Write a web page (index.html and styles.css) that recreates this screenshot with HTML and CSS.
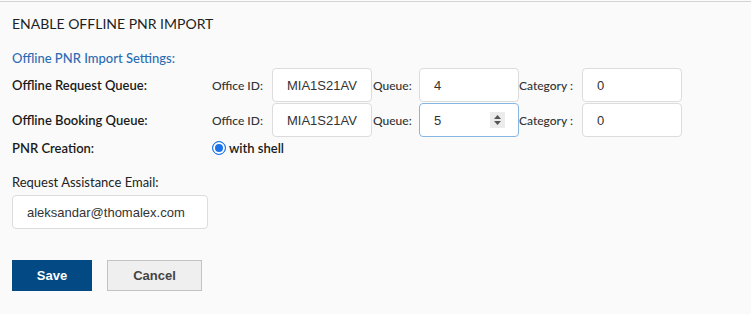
FILE: index.html
```html
<!DOCTYPE html>
<html lang="en">
<head>
  <meta charset="UTF-8">
  <title>Enable Offline PNR Import</title>
  <link rel="stylesheet" href="styles.css">
</head>
<body>
  <div class="page">
    <h1 class="title">ENABLE OFFLINE PNR IMPORT</h1>
    <h2 class="section">Offline PNR Import Settings:</h2>

    <div class="row">
      <div class="row-label">Offline Request Queue:</div>
      <span class="lbl lbl-office">Office ID:</span>
      <input class="field" type="text" value="MIA1S21AV">
      <span class="lbl lbl-queue">Queue:</span>
      <input class="field" type="text" value="4">
      <span class="lbl lbl-cat">Category :</span>
      <input class="field" type="text" value="0">
    </div>

    <div class="row row-2">
      <div class="row-label">Offline Booking Queue:</div>
      <span class="lbl lbl-office">Office ID:</span>
      <input class="field" type="text" value="MIA1S21AV">
      <span class="lbl lbl-queue">Queue:</span>
      <div class="spin-wrap">
        <input class="field field-focus" type="text" value="5">
        <span class="spinner">
          <svg width="9" height="12" viewBox="0 0 9 12"><path d="M4.5 1 L8 5 H1 Z M4.5 11 L8 7 H1 Z" fill="#555"/></svg>
        </span>
      </div>
      <span class="lbl lbl-cat">Category :</span>
      <input class="field" type="text" value="0">
    </div>

    <div class="row-pnr">
      <div class="row-label">PNR Creation:</div>
      <label class="radio"><span class="dot"></span>with shell</label>
    </div>

    <div class="email-label">Request Assistance Email:</div>
    <input class="field field-email" type="text" value="aleksandar@thomalex.com">

    <div class="actions">
      <button class="btn btn-save">Save</button>
      <button class="btn btn-cancel">Cancel</button>
    </div>
  </div>
</body>
</html>
```

FILE: styles.css
```css
html {
  background: #fafafa;
}

body {
  margin: 0;
  font-family: Lato, "Open Sans", sans-serif;
  color: #222;
}

.page {
  margin-top: 1px;
  border-top: 1px solid #d4d4d4;
  padding: 12px 12px 0 12px;
}

.title {
  margin: 0;
  font-size: 14px;
  font-weight: normal;
  line-height: 20px;
  color: #1e1e1e;
}

.section {
  margin: 14px 0 0 0;
  font-size: 13px;
  font-weight: 500;
  line-height: 20px;
  color: #2c6cb3;
}

.row {
  display: flex;
  align-items: center;
  height: 34px;
}

.row-2 {
  margin-top: 1px;
}

.row-label {
  width: 200px;
  flex-shrink: 0;
  font-size: 13px;
  font-weight: 600;
  color: #1a1a1a;
}

.lbl {
  font-size: 12px;
  font-weight: 500;
  color: #333;
}

.lbl-office {
  width: 60px;
}

.lbl-queue {
  width: 46px;
  margin-left: 1px;
}

.lbl-cat {
  width: 63px;
}

.field {
  box-sizing: border-box;
  width: 100px;
  height: 34px;
  margin: 0;
  padding: 0 0 0 14px;
  border: 1px solid #dcdcdc;
  border-radius: 4px;
  background: #fff;
  font-family: "Liberation Sans", Arial, sans-serif;
  font-size: 13px;
  color: #333;
  outline: none;
}

.field-focus {
  border-color: #86b7e3;
}

.spin-wrap {
  position: relative;
  width: 100px;
  height: 34px;
}

.spinner {
  position: absolute;
  left: 71px;
  top: 9px;
  width: 15px;
  height: 16px;
  background: #ececec;
  display: flex;
  align-items: center;
  justify-content: center;
}

.row-pnr {
  display: flex;
  align-items: center;
  height: 20px;
  margin-top: 1px;
}

.radio {
  display: flex;
  align-items: center;
  font-size: 13px;
  font-weight: 600;
  color: #1a1a1a;
}

.dot {
  box-sizing: border-box;
  width: 14px;
  height: 14px;
  border-radius: 50%;
  border: 1px solid #1a73e8;
  background: #1a73e8;
  box-shadow: inset 0 0 0 2px #fff;
  margin-right: 3px;
}

.email-label {
  margin-top: 14px;
  font-size: 13px;
  line-height: 20px;
  color: #222;
}

.field-email {
  width: 196px;
  margin-top: 3px;
  display: block;
}

.actions {
  display: flex;
  gap: 15px;
  margin-top: 31px;
}

.btn {
  height: 31px;
  font-family: "Liberation Sans", Arial, sans-serif;
  font-size: 13px;
  font-weight: bold;
  cursor: pointer;
  border-radius: 0;
}

.btn-save {
  width: 80px;
  background: #034a84;
  border: none;
  color: #fff;
}

.btn-cancel {
  width: 95px;
  background: #efefef;
  border: 1px solid #c3c3c3;
  color: #444;
}
```
